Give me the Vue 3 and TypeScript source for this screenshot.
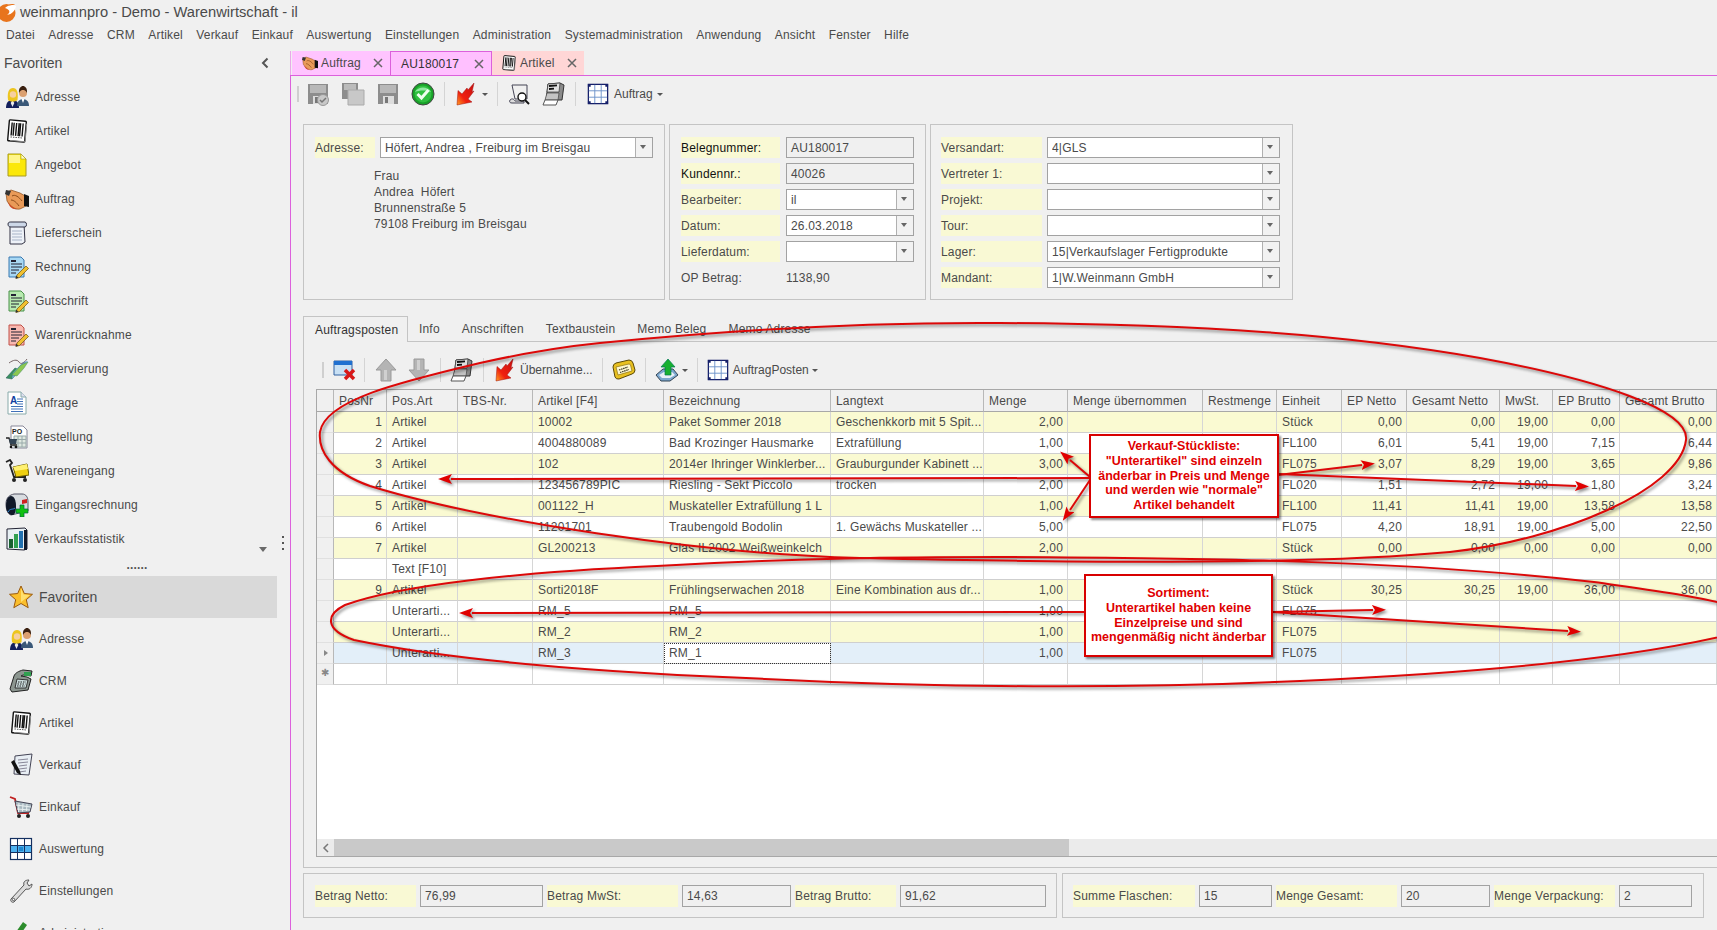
<script setup lang="ts">
// small pictograms, all drawn on a 24x24 box
const doc = (bg: string, line: string) =>
  `<path d="M4 2h12l3 3v17H4z" fill="${bg}" stroke="${line}"/><path d="M6 5h5v2H6z" fill="#223"/><path d="M6 9h11M6 12h11M6 15h8M6 18h5" stroke="#223" stroke-width="1.2"/>` +
  `<path d="M12 20l9-9 2.5 2.5-9 9-3.5 1z" fill="#f0c030" stroke="#6a5010" stroke-width=".7"/><path d="M11 20.5l-.5 3 3-.7z" fill="#333"/>`
const barcode = `<g transform="rotate(5 12 12)"><rect x="3.5" y="1.5" width="17" height="21" rx="1" fill="#fff" stroke="#111" stroke-width="1.4"/><path d="M6.5 4v13M8.5 4v13M11 4v13M13.5 4v13M15 4v13M17.5 4v13" stroke="#111" stroke-width="1.4"/><path d="M6 18.5h12" stroke="#555" stroke-dasharray="1.5 1"/><path d="M21 4v18H6" fill="none" stroke="#888"/></g>`
const people = `<path d="M1 23c0-6 3-8 6.500-8s6.500 2 6.500 8z" fill="#14205c"/><path d="M7.500 15l-1.800 3 1.800 4 1.800-4z" fill="#eee"/><path d="M3 15C2 7 4 3 8 3s5.500 4 4.500 12c-2 2-7.500 2-9.500 0z" fill="#edc51f"/><circle cx="8" cy="9.500" r="3.200" fill="#f6cfa0"/><path d="M12 21c0-5 3-7 6-7s6 2 6 7z" fill="#3a5878"/><path d="M16.500 14l1.500 4 1.500-4z" fill="#fff"/><circle cx="18" cy="8" r="4" fill="#dba070"/><path d="M14 8c-.5-5 2-7 4-7s4.500 2 4 7c-1-2.500-3-3-4-3s-3 .5-4 3z" fill="#3a2010"/>`
const printer = `<path d="M6 2l12-1 4 2-2 15H4z" fill="#8a8a8a" stroke="#333"/><path d="M6 2l12-1-1 9H5z" fill="#e0e0e0" stroke="#333" stroke-width=".7"/><path d="M7 4l8-.6M7 7l5-.3" stroke="#111" stroke-width="1.800"/><path d="M5 11h12l-1 7H3z" fill="#c4c4c4" stroke="#444" stroke-width=".7"/><path d="M3 18l-2 5h13l2-5z" fill="#fff" stroke="#555"/>`
const grid = `<rect x="1.500" y="1.500" width="21" height="21" fill="#fff" stroke="#16206a" stroke-width="1.400"/><path d="M8.500 2v20M15.500 2v20M2 8.500h20M2 15.500h20" stroke="#6a90c8"/><path d="M1 1h3v3H1zM20 1h3v3h-3zM1 20h3v3H1zM20 20h3v3h-3z" fill="#16206a"/>`
const floppy = `<path d="M2 2h20v20H2z" fill="#8d8d8d"/><path d="M4 3h16v8H4z" fill="#b8b8b8"/><path d="M7 14h11v8H7z" fill="#ddd"/><path d="M9 15h3v6H9z" fill="#777"/>`
const redArrow = `<linearGradient id="redfade" x1="0" y1="1" x2="1" y2="0"><stop offset="0" stop-color="#ffa020"/><stop offset=".35" stop-color="#f02010"/><stop offset="1" stop-color="#c81010"/></linearGradient><path d="M3 23 4 8.500l4 3.500 5-6 1 2 6-7-2 9 2-1-6 8 4 3z" fill="url(#redfade)" stroke="#a01010" stroke-width=".5"/>`

const icons: Record<string, string> = {
  people,
  barcode,
  printer,
  grid,
  floppy,
  redArrow,
  note: `<path d="M3 1h13l5 5v17H3z" fill="#fbe80a" stroke="#a89a20"/><path d="M16 1v5h5z" fill="#fffcc0" stroke="#a89a20" stroke-width=".6"/><path d="M4 2h11v8H4z" fill="#fff68a"/>`,
  hands: `<path d="M1 6l5-3 9 3 7 4-1 9-6 3c-5 1-10-3-13-8z" fill="#e99a58" stroke="#8a4a18" stroke-width=".7"/><path d="M7 9c3-2 7 1 10 5M6 13c3 0 6 3 8 6" stroke="#8a4a18" fill="none"/><path d="M1 3l5 1-2 5-4-2z" fill="#333"/><path d="M19 7l5 2v11l-5-1z" fill="#111"/><path d="M3 15c2 3 5 6 9 7-4 1-8-2-9-7z" fill="#d04820"/>`,
  scroll: `<path d="M5 3h14l1 18-3 2H5z" fill="#eef2f8" stroke="#334"/><path d="M3 3c0-2 2-2 3-2h14c2 0 2 5 0 5H6C4 6 3 5 3 3z" fill="#cdd8e8" stroke="#334"/><path d="M7 10h10M7 13h10M7 16h10M7 19h10" stroke="#a8b4c8"/>`,
  invoice: doc('#a8d8f4', '#3878b0'),
  credit: doc('#b8eab0', '#489048'),
  retoure: doc('#f8b8b0', '#c05048'),
  tags: `<path d="M1 21l9-10 5 2-8 9z" fill="#3a9060" stroke="#255" stroke-width=".5"/><path d="M7 22l9-11 7-7-5 1-10 11z" fill="#70a8d8"/><path d="M12 19l7-8 4-6-7 3-9 10z" fill="#8cc850" stroke="#486" stroke-width=".5"/><path d="M4 6c4-3 8-4 10-1s5 1 8-3" stroke="#766" fill="none"/>`,
  query: `<path d="M3 1h13l5 5v17H3z" fill="#fff" stroke="#8aa"/><path d="M16 1v5h5" fill="#dde" stroke="#8aa"/><text x="5" y="13" font-family="Liberation Sans" font-weight="700" font-size="10" fill="#1040a0">A</text><path d="M12 8h6M12 10.500h6M12 13h6M6 15.500h12M6 18h12M6 20.500h12" stroke="#4070b8"/>`,
  order: `<path d="M6 1h12l4 4v18H6z" fill="#fff" stroke="#889"/><text x="7" y="9" font-family="Liberation Sans" font-weight="700" font-size="7" fill="#222">PO</text><path d="M9 11h12v11H9z" fill="#dfe8e0" stroke="#9aa"/><path d="M13 11v11M17 11v11M9 14.500h12M9 18h12" stroke="#9aa"/><path d="M1 13h3l2 7h6" fill="none" stroke="#222" stroke-width="1.300"/><path d="M4 14h8l-1 5H5z" fill="#345" /><circle cx="6" cy="22" r="1.300" fill="#111"/><circle cx="11" cy="22" r="1.300" fill="#111"/>`,
  goods: `<path d="M1 3l4-2 2 3-2 2 4 12h12" fill="none" stroke="#222" stroke-width="1.800"/><path d="M8 8l14-3 2 11-13 2z" fill="#f0d010" stroke="#6a5a00"/><path d="M8 8l14-3 1 5-13 2z" fill="#fff070"/><circle cx="9" cy="21" r="2" fill="#222"/><circle cx="20" cy="21" r="2" fill="#222"/>`,
  mailbox: `<path d="M1 11C1 4 5 2 9 1h8c4 0 6 3 6 8v9L6 22c-3-1-5-5-5-11z" fill="#d8dce0" stroke="#556"/><path d="M1 13C1 7 3 3 6 3s5 4 5 10-1 8-3 9H6c-3-1-5-4-5-9z" fill="#101828"/><path d="M3 19c2-4 5-2 7-4" stroke="#3090e0" fill="none"/><path d="M17 7l5-1v4l-5 1z" fill="#d02020"/><path d="M15 12h4v4h4v4h-4v4h-4v-4h-4v-4h4z" fill="#10c010" stroke="#064" stroke-width=".7"/>`,
  stats: `<path d="M2 2l18-1 2 2v19l-3 1-17-1z" fill="#e8f0f4" stroke="#223"/><path d="M4 12h4v9H4z" fill="#186030"/><path d="M9 7h4v14H9z" fill="#30a050"/><path d="M14 4h4v17h-4z" fill="#2070b0"/><path d="M19 3h3v20h-3z" fill="#101828"/>`,
  star: `<path d="M12 1l3.300 7.500 8.200.8-6.200 5.400 1.900 8L12 18.500 4.800 22.700l1.900-8L.5 9.300l8.200-.8z" fill="#fbbf2c" stroke="#9a5a10"/><path d="M12 3l2.500 6.500 6.500.6-9 7z" fill="#ffe070"/>`,
  phone: `<path d="M1 20l4-13c1-3 5-5 9-6l9 1-1 5-8-1-2 1 6 1 4 2-3 11-16 2z" fill="#8c9690" stroke="#222"/><path d="M15 3h7v4h-7z" fill="#30a050"/><path d="M8 10l11 1-2 8H6z" fill="#cdd" stroke="#333"/><path d="M9 13h8M8.500 15h8M8 17h8" stroke="#222" stroke-dasharray="1.500 1"/>`,
  sales: `<path d="M6 3l17-2-3 21-15-1z" fill="#e8eef4" stroke="#445"/><path d="M9 7l10-1M9 10l10-1M10 13l8-1M10 16l8-1M10 19l7-1" stroke="#889"/><path d="M2 9l3-2 6 11 1 4-4-2z" fill="#111"/>`,
  cart: `<path d="M1 2l5 2 3 14h11" fill="none" stroke="#c02020" stroke-width="1.800"/><path d="M6 6l17 3-2 8-12 1z" fill="#a8b8c0" stroke="#445"/><path d="M10 8l-.5 9M14 8.500l-.5 8M18 9l-.5 7M7 10l15 2M8 14l13 1" stroke="#e8f0f0"/><circle cx="10" cy="21" r="2" fill="#222"/><circle cx="19" cy="21" r="2" fill="#222"/>`,
  table: `<rect x="1.500" y="1.500" width="21" height="21" fill="#fff" stroke="#143060" stroke-width="1.200"/><path d="M2 8.500h20v7H2z" fill="#4db2f0"/><path d="M8.500 2v20M15.500 2v20M2 8.500h20M2 15.500h20" stroke="#143060"/><path d="M10 10h4v4h-4z" fill="#2088d0"/>`,
  wrench: `<path d="M2 20l13-14c-1-3 1-5 5-5l-2 3 2 3 3-2c0 4-3 6-6 5L5 23c-2 1-4-1-3-3z" fill="#dcdcdc" stroke="#555"/><circle cx="4.500" cy="20.500" r="1.200" fill="#fff" stroke="#555"/>`,
  admin: `<path d="M14 1l4 3-7 10-4-3z" fill="#2c8c2c"/><path d="M2 20l5-9 4 3-6 8z" fill="#666"/>`,
  save1: `${floppy}<circle cx="17" cy="18" r="5.500" fill="#c8c8c8" stroke="#999"/><path d="M14 18l2 2 4-4" fill="none" stroke="#777" stroke-width="1.500"/>`,
  save2: `<path d="M1 1h16v16H1z" fill="#8d8d8d"/><path d="M3 2h12v6H3z" fill="#bbb"/><path d="M7 8h16v15H7z" fill="#c8c8c8" stroke="#aaa"/>`,
  ok: `<circle cx="12" cy="12" r="11" fill="#18a028" stroke="#444"/><circle cx="12" cy="12" r="8.500" fill="#30c040"/><path d="M4 10c3-6 13-6 16 0-5-2-11-2-16 0z" fill="#90e8a0"/><path d="M6.500 12l4 4 7-8" fill="none" stroke="#f0fff0" stroke-width="3"/>`,
  search: `<path d="M5 3h15v14H8z" fill="#f0f0f0" stroke="#445"/><path d="M3 18c2-2 4-1 5 1h9v2H5c-2 0-3-1-2-3z" fill="#ddd" stroke="#445"/><circle cx="15" cy="15" r="4" fill="#fff" stroke="#111" stroke-width="1.400"/><path d="M18 18l4 4" stroke="#111" stroke-width="2"/>`,
  remove: `<path d="M1 3h18v14H1z" fill="#c8e0f4" stroke="#3060a0"/><path d="M1 3h18v4H1z" fill="#2070d0"/><path d="M12 12l9 9M21 12l-9 9" stroke="#d81818" stroke-width="3.500"/>`,
  up: `<path d="M12 1l10 11h-5v11H7V12H2z" fill="#b4b4b4" stroke="#9a9a9a"/><path d="M10 12h3v10h-3z" fill="#d0d0d0"/>`,
  down: `<path d="M12 23l10-11h-5V1H7v11H2z" fill="#b4b4b4" stroke="#9a9a9a"/><path d="M10 2h3v10h-3z" fill="#d0d0d0"/>`,
  ticket: `<path d="M1 9q0-3 3-4l13-3q3 0 4 3l2 7q0 3-3 4L7 21q-3 .5-4-2z" fill="#e8c020" stroke="#5a4808"/><path d="M4 9l13-3q1 0 1.500 1l1.500 6-14 4z" fill="#fff8d0" stroke="#8a7010" stroke-width=".7"/><path d="M7 12l9-3M8 14.500l9-3" stroke="#332" stroke-width="1.200" stroke-dasharray="1.500 .7"/>`,
  upload: `<path d="M1 17l7-6h10l5 6-8 6H6z" fill="#7ca8d0" stroke="#345"/><path d="M4 17l5-3h8l3 3-5 3H7z" fill="#e8f0f8"/><path d="M13 1l7 8h-4v8h-6V9H6z" fill="#18b030" stroke="#075" stroke-width=".7"/>`,
}

const menu = ['Datei', 'Adresse', 'CRM', 'Artikel', 'Verkauf', 'Einkauf', 'Auswertung', 'Einstellungen', 'Administration', 'Systemadministration', 'Anwendung', 'Ansicht', 'Fenster', 'Hilfe']

const favourites = [
  ['people', 'Adresse'], ['barcode', 'Artikel'], ['note', 'Angebot'], ['hands', 'Auftrag'], ['scroll', 'Lieferschein'],
  ['invoice', 'Rechnung'], ['credit', 'Gutschrift'], ['retoure', 'Warenrücknahme'], ['tags', 'Reservierung'], ['query', 'Anfrage'],
  ['order', 'Bestellung'], ['goods', 'Wareneingang'], ['mailbox', 'Eingangsrechnung'], ['stats', 'Verkaufsstatistik'], ['hands', ''],
]

const modules = [
  ['people', 'Adresse'], ['phone', 'CRM'], ['barcode', 'Artikel'], ['sales', 'Verkauf'],
  ['cart', 'Einkauf'], ['table', 'Auswertung'], ['wrench', 'Einstellungen'], ['admin', 'Administration'],
]

const docTabs = [
  { icon: 'hands', label: 'Auftrag', kind: 'order' },
  { icon: '', label: 'AU180017', kind: 'active' },
  { icon: 'barcode', label: 'Artikel', kind: 'item' },
]

const beleg = [
  { label: 'Belegnummer:', value: 'AU180017', type: 'ro', dark: true },
  { label: 'Kundennr.:', value: '40026', type: 'ro', dark: true },
  { label: 'Bearbeiter:', value: 'il', type: 'combo' },
  { label: 'Datum:', value: '26.03.2018', type: 'combo' },
  { label: 'Lieferdatum:', value: '', type: 'combo' },
]

const versand = [
  ['Versandart:', '4|GLS'], ['Vertreter 1:', ''], ['Projekt:', ''], ['Tour:', ''],
  ['Lager:', '15|Verkaufslager Fertigprodukte'], ['Mandant:', '1|W.Weinmann GmbH'],
]

const subTabs = ['Info', 'Anschriften', 'Textbaustein', 'Memo Beleg', 'Memo Adresse']

const columns = [
  { name: 'PosNr', w: 53 }, { name: 'Pos.Art', w: 71 }, { name: 'TBS-Nr.', w: 75 }, { name: 'Artikel [F4]', w: 131 },
  { name: 'Bezeichnung', w: 167 }, { name: 'Langtext', w: 153 }, { name: 'Menge', w: 84 }, { name: 'Menge übernommen', w: 135 },
  { name: 'Restmenge', w: 74 }, { name: 'Einheit', w: 65 }, { name: 'EP Netto', w: 65 }, { name: 'Gesamt Netto', w: 93 },
  { name: 'MwSt.', w: 53 }, { name: 'EP Brutto', w: 67 }, { name: 'Gesamt Brutto', w: 97 },
]
const rightCols = new Set([0, 6, 10, 11, 12, 13, 14])

const rows: string[][] = [
  ['1', 'Artikel', '', '10002', 'Paket Sommer 2018', 'Geschenkkorb mit 5 Spit...', '2,00', '', '', 'Stück', '0,00', '0,00', '19,00', '0,00', '0,00'],
  ['2', 'Artikel', '', '4004880089', 'Bad Krozinger Hausmarke', 'Extrafüllung', '1,00', '', '', 'FL100', '6,01', '5,41', '19,00', '7,15', '6,44'],
  ['3', 'Artikel', '', '102', '2014er Ihringer Winklerber...', 'Grauburgunder Kabinett ...', '3,00', '', '', 'FL075', '3,07', '8,29', '19,00', '3,65', '9,86'],
  ['4', 'Artikel', '', '123456789PIC', 'Riesling - Sekt Piccolo', 'trocken', '2,00', '', '', 'FL020', '1,51', '2,72', '19,00', '1,80', '3,24'],
  ['5', 'Artikel', '', '001122_H', 'Muskateller Extrafüllung 1 L', '', '1,00', '', '', 'FL100', '11,41', '11,41', '19,00', '13,58', '13,58'],
  ['6', 'Artikel', '', '11201701', 'Traubengold Bodolin', '1. Gewächs Muskateller ...', '5,00', '', '', 'FL075', '4,20', '18,91', '19,00', '5,00', '22,50'],
  ['7', 'Artikel', '', 'GL200213', 'Glas IL2002 Weißweinkelch', '', '2,00', '', '', 'Stück', '0,00', '0,00', '0,00', '0,00', '0,00'],
  ['', 'Text [F10]', '', '', '', '', '', '', '', '', '', '', '', '', ''],
  ['9', 'Artikel', '', 'Sorti2018F', 'Frühlingserwachen 2018', 'Eine Kombination aus dr...', '1,00', '', '', 'Stück', '30,25', '30,25', '19,00', '36,00', '36,00'],
  ['', 'Unterarti...', '', 'RM_5', 'RM_5', '', '1,00', '', '', 'FL075', '', '', '', '', ''],
  ['', 'Unterarti...', '', 'RM_2', 'RM_2', '', '1,00', '', '', 'FL075', '', '', '', '', ''],
  ['', 'Unterarti...', '', 'RM_3', 'RM_1', '', '1,00', '', '', 'FL075', '', '', '', '', ''],
  ['', '', '', '', '', '', '', '', '', '', '', '', '', '', ''],
]
const currentRow = 11

const totals = [
  ['Betrag Netto:', '76,99'], ['Betrag MwSt:', '14,63'], ['Betrag Brutto:', '91,62'],
]
const counts = [
  ['Summe Flaschen:', '15'], ['Menge Gesamt:', '20'], ['Menge Verpackung:', '2'],
]

const arrows = [
  [1090, 478, 451, 479], [1090, 477, 1070, 460], [1090, 480, 1070, 510], [1278, 475, 1362, 465], [1278, 474, 1576, 486],
  [1084, 612, 472, 613], [1272, 612, 1373, 610], [1272, 612, 1568, 631],
]
</script>

<template>
  <div class="app">
    <header class="title">
      <svg class="logo" viewBox="0 0 16 20">
        <circle cx="6.500" cy="11" r="9" fill="#e8741c" />
        <path d="M5 6c3-3 8-4 11-2-1 5-4 8-9 9 3-2 4-5-2-7z" fill="#fff" />
        <path d="M8 3c3-1.500 6-1 7 0-3 0-5 .5-7 0z" fill="#e8741c" />
      </svg>
      <span>weinmannpro - Demo - Warenwirtschaft - il</span>
    </header>

    <nav class="menu">
      <span v-for="item in menu" :key="item">{{ item }}</span>
    </nav>

    <div class="body">
      <aside class="side">
        <div class="side-head">
          <span>Favoriten</span>
          <svg class="chev" viewBox="0 0 10 12"><path d="M7.500 1.500 3 6l4.500 4.500" fill="none" stroke="#555" stroke-width="2" /></svg>
        </div>
        <div class="fav-list">
          <div v-for="(item, i) in favourites" :key="i" class="fav">
            <svg class="ico" viewBox="0 0 24 24" v-html="icons[item[0]]"></svg>
            <span>{{ item[1] }}</span>
          </div>
        </div>
        <div class="sash">......</div>
        <div class="mod-head">
          <svg class="ico" viewBox="0 0 24 24" v-html="icons.star"></svg>
          <span>Favoriten</span>
        </div>
        <div class="mod-list">
          <div v-for="item in modules" :key="item[1]" class="mod">
            <svg class="ico" viewBox="0 0 24 24" v-html="icons[item[0]]"></svg>
            <span>{{ item[1] }}</span>
          </div>
        </div>
        <i class="side-caret"></i>
        <i class="side-dots"></i>
      </aside>

      <main class="main">
        <div class="doc-tabs">
          <div v-for="tab in docTabs" :key="tab.label" class="doc-tab" :class="tab.kind">
            <svg v-if="tab.icon" class="tab-ico" viewBox="0 0 24 24" v-html="icons[tab.icon]"></svg>
            <span class="doc-label">{{ tab.label }}</span>
            <svg class="close" viewBox="0 0 10 10"><path d="M1 1l8 8M9 1l-8 8" stroke="#666" stroke-width="1.500" /></svg>
          </div>
        </div>

        <div class="work">
          <div class="toolbar top">
            <i class="handle"></i>
            <svg class="ico" viewBox="0 0 24 24" v-html="icons.save1"></svg>
            <svg class="ico" viewBox="0 0 24 24" v-html="icons.save2"></svg>
            <svg class="ico" viewBox="0 0 24 24" v-html="icons.floppy"></svg>
            <svg class="ico" viewBox="0 0 24 24" v-html="icons.ok"></svg>
            <i class="sep"></i>
            <svg class="ico" viewBox="0 0 24 24" v-html="icons.redArrow"></svg>
            <i class="caret"></i>
            <i class="sep"></i>
            <svg class="ico" viewBox="0 0 24 24" v-html="icons.search"></svg>
            <svg class="ico" viewBox="0 0 24 24" v-html="icons.printer"></svg>
            <i class="sep"></i>
            <svg class="ico grid-ico" viewBox="0 0 24 24" v-html="icons.grid"></svg>
            <span class="tool-text">Auftrag</span>
            <i class="caret"></i>
          </div>

          <div class="panels">
            <section class="panel addr">
              <div class="addr-row">
                <label class="lbl">Adresse:</label>
                <div class="combo"><span>Höfert, Andrea , Freiburg im Breisgau</span><b></b></div>
              </div>
              <div class="addr-text">
                <div>Frau</div>
                <div>Andrea&nbsp; Höfert</div>
                <div>Brunnenstraße 5</div>
                <div>79108 Freiburg im Breisgau</div>
              </div>
            </section>

            <section class="panel beleg">
              <template v-for="row in beleg" :key="row.label">
                <label class="lbl" :class="{ dark: row.dark }">{{ row.label }}</label>
                <div v-if="row.type === 'ro'" class="field">{{ row.value }}</div>
                <div v-else class="combo"><span>{{ row.value }}</span><b></b></div>
              </template>
              <span class="plain">OP Betrag:</span>
              <span class="plain amount">1138,90</span>
            </section>

            <section class="panel versand">
              <template v-for="row in versand" :key="row[0]">
                <label class="lbl">{{ row[0] }}</label>
                <div class="combo"><span>{{ row[1] }}</span><b></b></div>
              </template>
            </section>
          </div>

          <div class="sub-tabs">
            <div class="sub-tab current">Auftragsposten</div>
            <div v-for="tab in subTabs" :key="tab" class="sub-tab">{{ tab }}</div>
          </div>

          <section class="sub-panel">
            <div class="toolbar inner">
              <i class="handle"></i>
              <svg class="ico" viewBox="0 0 24 24" v-html="icons.remove"></svg>
              <i class="sep first"></i>
              <svg class="ico" viewBox="0 0 24 24" v-html="icons.up"></svg>
              <svg class="ico" viewBox="0 0 24 24" v-html="icons.down"></svg>
              <i class="sep"></i>
              <svg class="ico" viewBox="0 0 24 24" v-html="icons.printer"></svg>
              <i class="sep"></i>
              <svg class="ico" viewBox="0 0 24 24" v-html="icons.redArrow"></svg>
              <span class="tool-text">Übernahme...</span>
              <i class="sep"></i>
              <svg class="ico" viewBox="0 0 24 24" v-html="icons.ticket"></svg>
              <i class="sep"></i>
              <svg class="ico" viewBox="0 0 24 24" v-html="icons.upload"></svg>
              <i class="caret"></i>
              <i class="sep"></i>
              <svg class="ico grid-ico" viewBox="0 0 24 24" v-html="icons.grid"></svg>
              <span class="tool-text">AuftragPosten</span>
              <i class="caret"></i>
            </div>

            <div class="grid-box">
              <div class="grid-scroll">
                <table class="grid">
                  <colgroup>
                    <col class="marker-col" />
                    <col v-for="col in columns" :key="col.name" :style="{ width: col.w + 'px' }" />
                  </colgroup>
                  <thead>
                    <tr>
                      <th></th>
                      <th v-for="col in columns" :key="col.name">{{ col.name }}</th>
                    </tr>
                  </thead>
                  <tbody>
                    <tr v-for="(row, r) in rows" :key="r" :class="{ odd: r % 2 === 0 && r < 12, now: r === currentRow }">
                      <td class="marker">
                        <i v-if="r === currentRow" class="row-arrow"></i>
                        <span v-else-if="r === 12" class="row-new">✱</span>
                      </td>
                      <td
                        v-for="(cell, c) in row"
                        :key="c"
                        :class="{ right: rightCols.has(c), edit: r === currentRow && c === 4 }"
                      >{{ cell }}</td>
                    </tr>
                  </tbody>
                </table>
              </div>
              <div class="hscroll">
                <div class="hbtn">
                  <svg viewBox="0 0 8 10" width="8" height="10"><path d="M6 1 2 5l4 4" fill="none" stroke="#777" stroke-width="1.500" /></svg>
                </div>
                <div class="hthumb"></div>
              </div>
            </div>
          </section>

          <div class="foot">
            <section class="panel foot-a">
              <template v-for="row in totals" :key="row[0]">
                <label class="lbl">{{ row[0] }}</label>
                <div class="field">{{ row[1] }}</div>
              </template>
            </section>
            <section class="panel foot-b">
              <template v-for="row in counts" :key="row[0]">
                <label class="lbl">{{ row[0] }}</label>
                <div class="field">{{ row[1] }}</div>
              </template>
            </section>
          </div>
        </div>
      </main>
    </div>

    <!-- red hand-drawn annotations lying over the screenshot -->
    <div class="marks">
      <svg class="marks-svg" width="1717" height="930" viewBox="0 0 1717 930">
        <defs>
          <marker id="head" markerWidth="14" markerHeight="10" refX="1" refY="5" orient="auto" markerUnits="userSpaceOnUse">
            <path d="M0 0 14 5 0 10 3 5z" fill="#e00000" />
          </marker>
        </defs>
        <g fill="none" stroke="#dc0808" stroke-width="2">
          <path d="M600 343C700 333 850 322 1000 323C1200 324 1350 335 1480 358C1600 380 1690 410 1686 440C1680 490 1560 540 1450 552C1300 566 1050 562 860 558C700 554 480 520 370 486C330 472 318 450 320 432C325 400 400 382 480 363C520 354 560 347 600 343Z" />
          <path d="M1000 557C1200 558 1400 560 1594 582C1650 590 1700 596 1740 608L1740 632C1650 655 1500 672 1300 681C1100 690 900 686 746 678C600 672 450 660 354 640C325 630 325 615 345 605C400 585 520 572 657 566C800 558 900 557 1000 557Z" />
          <line
            v-for="(a, i) in arrows"
            :key="i"
            :x1="a[0]"
            :y1="a[1]"
            :x2="a[2]"
            :y2="a[3]"
            marker-end="url(#head)"
          />
        </g>
      </svg>
      <div class="note one">
        Verkauf-Stückliste:<br />"Unterartikel" sind einzeln<br />änderbar in Preis und Menge<br />und werden wie "normale"<br />Artikel behandelt
      </div>
      <div class="note two">
        Sortiment:<br />Unterartikel haben keine<br />Einzelpreise und sind<br />mengenmäßig nicht änderbar
      </div>
    </div>
  </div>
</template>

<style>
html,
body {
  margin: 0;
  background: #f0f0f0;
}
</style>

<style scoped>
.app {
  position: relative;
  width: 1717px;
  height: 930px;
  overflow: hidden;
  background: #f0f0f0;
  color: #4a4a4a;
  font: 12px "Liberation Sans", Arial, sans-serif;
  letter-spacing: 0.18px;
}

.title {
  display: flex;
  align-items: center;
  gap: 4px;
  height: 24px;
  overflow: hidden;
  font-size: 14.7px;
  letter-spacing: 0;
}
.logo {
  width: 16px;
  height: 20px;
  flex: none;
}

.menu {
  display: flex;
  align-items: center;
  gap: 13.4px;
  box-sizing: border-box;
  height: 27px;
  padding: 0 0 5px 6px;
}

.body {
  display: flex;
  height: 879px;
}

.side {
  position: relative;
  width: 290px;
  flex: none;
  display: flex;
  flex-direction: column;
}
.side-head {
  display: flex;
  align-items: center;
  justify-content: space-between;
  height: 24px;
  padding: 0 20px 0 4px;
  font-size: 14px;
  letter-spacing: 0;
  margin-bottom: 5px;
}
.chev {
  width: 10px;
  height: 12px;
}
.fav-list {
  height: 483px;
  overflow: hidden;
}
.fav {
  display: flex;
  align-items: center;
  gap: 6px;
  height: 34px;
  padding-left: 5px;
}
.sash {
  height: 13px;
  line-height: 5px;
  text-align: center;
  width: 274px;
  font-weight: 700;
  color: #555;
}
.mod-head {
  display: flex;
  align-items: center;
  gap: 6px;
  width: 277px;
  height: 42px;
  padding-left: 9px;
  box-sizing: border-box;
  background: #d9d9d9;
  font-size: 14px;
  letter-spacing: 0;
}
.mod-list {
  flex: 1;
  overflow: hidden;
}
.mod {
  display: flex;
  align-items: center;
  gap: 6px;
  height: 42px;
  padding-left: 9px;
}
.side-caret {
  position: absolute;
  left: 259px;
  top: 496px;
  border: 4.5px solid transparent;
  border-top: 5px solid #6a6a6a;
  border-bottom: 0;
}
.side-dots {
  position: absolute;
  left: 282px;
  top: 485px;
  width: 2px;
  height: 2px;
  background: #555;
  box-shadow: 0 6px #555, 0 12px #555;
}

.ico {
  width: 24px;
  height: 24px;
  flex: none;
}

.main {
  flex: 1;
  min-width: 0;
  display: flex;
  flex-direction: column;
}
.doc-tabs {
  display: flex;
  height: 24px;
  padding-left: 1px;
  border-left: 1px solid #e8a8e8;
}
.doc-tab {
  display: flex;
  align-items: center;
  box-sizing: border-box;
  height: 24px;
}
.doc-tab.order {
  width: 98px;
  padding: 0 7px 0 10px;
  background: #ffc4ff;
}
.doc-tab.active {
  width: 102px;
  padding: 0 7px 0 10px;
  background: #ffc0ff;
  border: 1px solid #dc60dc;
  border-bottom: 0;
  color: #333;
}
.doc-tab.item {
  width: 92px;
  padding: 0 7px 0 9px;
  background: #ffd6d6;
}
.doc-label {
  flex: 1;
}
.tab-ico {
  width: 16px;
  height: 16px;
  margin-right: 3px;
}
.close {
  width: 10px;
  height: 10px;
}

.work {
  flex: 1;
  min-height: 0;
  display: flex;
  flex-direction: column;
  border-top: 1px solid #dc60dc;
  border-left: 1px solid #dc60dc;
}

.toolbar {
  display: flex;
  align-items: center;
  flex: none;
  box-sizing: border-box;
}
.toolbar.top {
  gap: 11px;
  height: 36px;
  margin-bottom: 12px;
  padding-left: 6px;
}
.toolbar.top .handle {
  margin-right: -4px;
}
.toolbar.top .sep {
  margin: 0 -2px;
}
.toolbar.top .caret {
  margin-left: -7px;
}
.toolbar.top .grid-ico {
  margin-left: 2px;
}
.toolbar.top .tool-text {
  margin-left: -6px;
}
.toolbar.inner {
  gap: 9px;
  height: 47px;
  padding: 9px 0 0 18px;
}
.toolbar.inner .sep.first {
  margin-left: -2px;
}
.toolbar.inner .tool-text {
  margin-left: -6px;
}
.toolbar.inner .grid-ico + .tool-text {
  margin-left: -5px;
}
.toolbar.inner .caret {
  margin-left: -6px;
}
.handle {
  width: 2px;
  height: 16px;
  background: #cfcfcf;
  flex: none;
}
.sep {
  width: 1px;
  height: 24px;
  background: #d4d4d4;
  flex: none;
}
.caret {
  border: 3px solid transparent;
  border-top: 3.5px solid #555;
  border-bottom: 0;
  flex: none;
}
.grid-ico {
  width: 22px;
  height: 22px;
}
.tool-text {
  white-space: nowrap;
  letter-spacing: 0;
}

.panels {
  display: flex;
  gap: 4px;
  height: 176px;
  flex: none;
  padding-left: 12px;
}
.panel {
  box-sizing: border-box;
  border: 1px solid #c4c4c4;
}
.lbl {
  display: flex;
  align-items: center;
  background: #f9f9d4;
  white-space: nowrap;
}
.lbl.dark {
  color: #111;
}
.field,
.combo {
  display: flex;
  align-items: center;
  box-sizing: border-box;
  height: 21px;
  border: 1px solid #a2a2a2;
  padding-left: 4px;
}
.combo {
  background: #fff;
  padding-right: 0;
}
.combo span {
  flex: 1;
  white-space: nowrap;
  overflow: hidden;
}
.combo b {
  position: relative;
  width: 16px;
  align-self: stretch;
  flex: none;
  border-left: 1px solid #b0b0b0;
  background: #f2f2f2;
}
.combo b::after {
  content: "";
  position: absolute;
  left: 4px;
  top: 7px;
  border: 3px solid transparent;
  border-top: 4px solid #666;
  border-bottom: 0;
}

.addr {
  width: 362px;
  padding: 12px 11px 0;
}
.addr-row {
  display: grid;
  grid-template-columns: 60px 273px;
  gap: 5px;
  height: 21px;
}
.addr-text {
  margin: 10px 0 0 59px;
  line-height: 16px;
}

.beleg {
  width: 257px;
  padding: 12px 0 0 11px;
  display: grid;
  grid-template-columns: 99px 128px;
  grid-auto-rows: 21px;
  column-gap: 6px;
  row-gap: 5px;
}
.plain {
  display: flex;
  align-items: center;
}
.versand {
  width: 363px;
  padding: 12px 0 0 10px;
  display: grid;
  grid-template-columns: 101px 233px;
  grid-auto-rows: 21px;
  column-gap: 5px;
  row-gap: 5px;
}

.sub-tabs {
  display: flex;
  flex: none;
  height: 25px;
  margin: 16px 0 0 12px;
}
.sub-tab {
  display: flex;
  align-items: center;
  box-sizing: border-box;
  height: 25px;
  margin-right: 22px;
}
.sub-tab.current {
  width: 105px;
  padding-left: 11px;
  margin-right: 11px;
  color: #333;
  border: 1px solid #c4c4c4;
  border-bottom: 0;
  position: relative;
  z-index: 1;
  height: 26px;
  background: #f0f0f0;
}

.sub-panel {
  box-sizing: border-box;
  height: 527px;
  flex: none;
  margin: 0 -4px 0 12px;
  border: 1px solid #c4c4c4;
  display: flex;
  flex-direction: column;
}
.grid-box {
  flex: none;
  box-sizing: border-box;
  height: 468px;
  margin-left: 12px;
  display: flex;
  flex-direction: column;
  background: #fff;
  border-left: 1px solid #a8a8a8;
  border-top: 1px solid #a8a8a8;
  border-bottom: 1px solid #a8a8a8;
}
.grid-scroll {
  flex: 1;
  min-height: 0;
  overflow: hidden;
}
.grid {
  width: 1400px;
  table-layout: fixed;
  border-collapse: separate;
  border-spacing: 0;
}
.marker-col {
  width: 17px;
}
.grid th,
.grid td {
  box-sizing: border-box;
  height: 21px;
  padding: 0 4px 0 5px;
  overflow: hidden;
  white-space: nowrap;
  font-weight: 400;
  text-align: left;
  border-right: 1px solid #d6d6d6;
  border-bottom: 1px solid #cfcfcf;
}
.grid th {
  height: 22px;
  background: #f0f0f0;
  border-right-color: #b8b8b8;
  border-bottom-color: #a8a8a8;
}
.grid td.right {
  text-align: right;
}
.grid tr.odd td {
  background: #fafad2;
}
.grid tr.now td {
  background: #e3eff9;
}
.grid td.marker,
.grid tr.odd td.marker,
.grid tr.now td.marker {
  position: relative;
  background: #f0f0f0;
  border-right-color: #b8b8b8;
  border-bottom-color: #e0e0e0;
}
.grid tr.now td.edit {
  background: #fff;
  outline: 1px dotted #333;
  outline-offset: -1px;
}
.row-arrow {
  position: absolute;
  left: 7px;
  top: 7px;
  border: 3.5px solid transparent;
  border-left: 4px solid #888;
  border-right: 0;
}
.row-new {
  position: absolute;
  left: 4px;
  top: 3px;
  font-size: 10px;
  color: #888;
}
.hscroll {
  display: flex;
  height: 17px;
  flex: none;
  background: #ebebeb;
}
.hbtn {
  display: flex;
  align-items: center;
  justify-content: center;
  width: 17px;
}
.hthumb {
  width: 735px;
  background: #c9c9c9;
}

.foot {
  display: flex;
  gap: 5px;
  flex: none;
  height: 45px;
  margin: 5px 0 0 12px;
}
.foot-a,
.foot-b {
  display: grid;
  align-items: stretch;
  align-content: center;
  column-gap: 4px;
  grid-auto-rows: 22px;
}
.foot-a {
  width: 754px;
  padding-left: 11px;
  grid-template-columns: 101px 123px 131px 109px 101px 146px;
}
.foot-b {
  width: 642px;
  padding-left: 10px;
  grid-template-columns: 122px 73px 121px 89px 121px 73px;
}
.foot .field {
  height: 22px;
}

.marks {
  position: absolute;
  inset: 0;
  pointer-events: none;
}
.marks-svg {
  position: absolute;
  left: 0;
  top: 0;
  filter: drop-shadow(2px 2px 1.5px rgba(0, 0, 0, 0.45));
}
.note {
  position: absolute;
  box-sizing: border-box;
  display: flex;
  align-items: center;
  justify-content: center;
  text-align: center;
  background: #fff;
  border: 2px solid #d80000;
  box-shadow: 2px 2px 2px rgba(0, 0, 0, 0.45);
  color: #e00000;
  font-weight: 700;
  font-size: 12.5px;
  letter-spacing: 0;
  line-height: 14.8px;
}
.note.one {
  left: 1089px;
  top: 434px;
  width: 190px;
  height: 84px;
}
.note.two {
  left: 1084px;
  top: 574px;
  width: 189px;
  height: 83px;
}
</style>
